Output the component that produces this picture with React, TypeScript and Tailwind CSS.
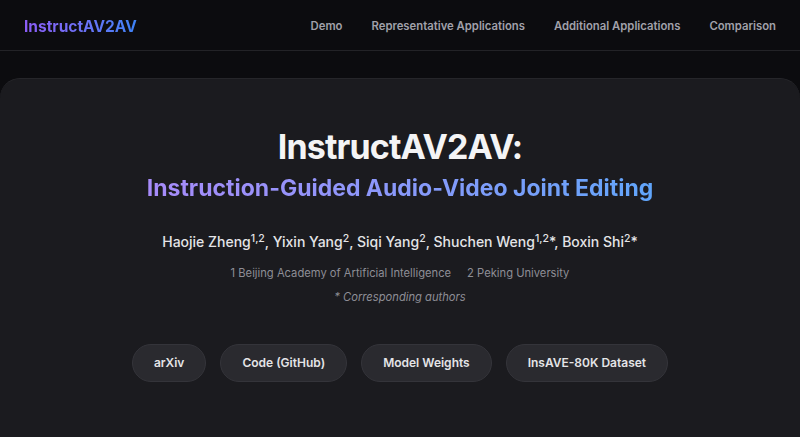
import React from "react";

const navLinks = ["Demo", "Representative Applications", "Additional Applications", "Comparison"];

const buttons = ["arXiv", "Code (GitHub)", "Model Weights", "InsAVE-80K Dataset"];

const Header = () => {
  return (
    <header className="h-[51px] pt-[3px] shrink-0 flex items-center justify-between px-6 border-b border-[#232327] bg-[#0c0c0f]">
      <div className="text-[15.5px] font-bold bg-gradient-to-r from-[#8b5cf6] to-[#3b82f6] bg-clip-text text-transparent">
        InstructAV2AV
      </div>
      <nav className="flex items-center gap-[29px] text-[11.3px] font-semibold text-[#a1a1aa]">
        {navLinks.map((l) => (
          <a key={l} href="#">{l}</a>
        ))}
      </nav>
    </header>
  );
};

const Authors = () => {
  return (
    <p className="mt-[28px] text-[14px] font-medium text-[#e4e4e7]">
      Haojie Zheng<sup>1,2</sup>, Yixin Yang<sup>2</sup>, Siqi Yang<sup>2</sup>, Shuchen Weng<sup>1,2</sup>*, Boxin Shi<sup>2</sup>*
    </p>
  );
};

const Hero = () => {
  return (
    <section className="mt-[27px] flex-1 rounded-t-[20px] bg-[#1b1b1f] border-t border-[#26262a] pt-[48px] flex flex-col items-center">
      <h1 className="text-[34px] leading-[40px] font-bold text-[#f4f4f5] tracking-tight">InstructAV2AV:</h1>
      <h2 className="mt-[6px] text-[23px] leading-[30px] font-bold bg-gradient-to-r from-[#a78bfa] to-[#60a5fa] bg-clip-text text-transparent">
        Instruction-Guided Audio-Video Joint Editing
      </h2>
      <Authors />
      <div className="mt-[13px] flex gap-[16px] text-[11.2px] text-[#8e8e96]">
        <span>1 Beijing Academy of Artificial Intelligence</span>
        <span>2 Peking University</span>
      </div>
      <p className="mt-[7px] text-[11.2px] italic text-[#8e8e96]">* Corresponding authors</p>
      <div className="mt-[38px] flex gap-[14px]">
        {buttons.map((b) => (
          <a
            key={b}
            href="#"
            className="h-[38px] flex items-center px-[21px] rounded-full border border-[#34343a] bg-[#2a2a2f] text-[12px] font-semibold text-[#e4e4e7]"
          >
            {b}
          </a>
        ))}
      </div>
    </section>
  );
};

export default function App() {
  return (
    <div className="h-screen flex flex-col bg-[#0c0c0f] overflow-hidden" style={{ fontFamily: "Inter, 'Noto Sans', sans-serif" }}>
      <Header />
      <Hero />
    </div>
  );
}
